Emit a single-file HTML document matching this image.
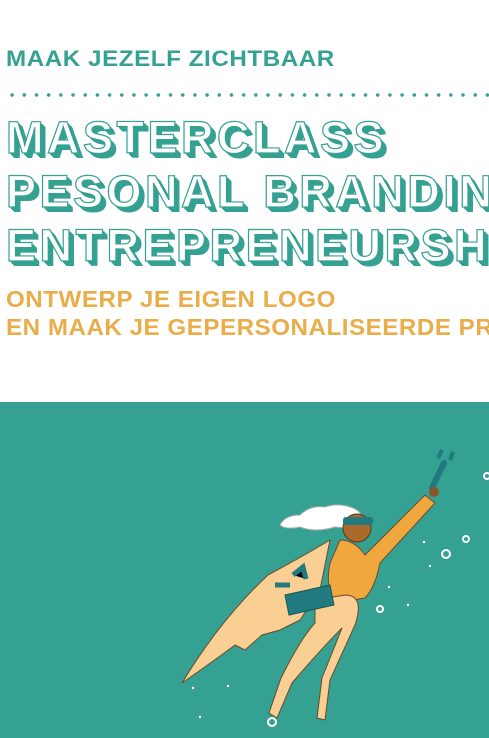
<!DOCTYPE html>
<html><head><meta charset="utf-8"><style>
html,body{margin:0;padding:0;width:489px;height:738px;overflow:hidden;background:#fff;font-family:"Liberation Sans",sans-serif}
#w{position:relative;width:489px;height:738px;overflow:hidden}
.t{position:absolute;left:6px;white-space:nowrap;font-weight:bold;text-transform:uppercase}
.sub{top:46px;font-size:22px;color:#35a193;letter-spacing:0.5px;transform:scaleX(1.1);transform-origin:left}
.dots{position:absolute;top:93px;left:6px;width:483px;height:4px;background:radial-gradient(circle,#35a193 1.6px,transparent 2px) 0 0/12.2px 4px repeat-x}
.big{font-size:45px;color:#fff;letter-spacing:3.5px;-webkit-text-stroke:1.2px #35a193;text-shadow:2px 2px 0 #35a193,3px 3px 0 #35a193,4px 4px 0 #35a193,5px 5px 0 #35a193}
.or{font-size:23px;color:#e9ad4a;letter-spacing:0.5px;transform:scaleX(1.05);transform-origin:left}
.teal{position:absolute;left:0;top:402px;width:489px;height:336px;background:#35a193}
</style></head><body><div id="w">
<div class="t sub">Maak jezelf zichtbaar</div>
<div class="dots"></div>
<div class="t big" style="top:112px">Masterclass</div>
<div class="t big" style="top:166px">Pesonal branding</div>
<div class="t big" style="top:220px">Entrepreneurship</div>
<div class="t or" style="top:286px">Ontwerp je eigen logo</div>
<div class="t or" style="top:314px">En maak je gepersonaliseerde producten</div>
<div class="teal">
<svg width="489" height="336" viewBox="0 402 489 336">
<path d="M330 540 Q300 558 268 575 Q220 620 182 683 Q215 660 235 645 L245 650 L262 635 L280 630 L300 620 L320 590 Z" fill="#f9cf94" stroke="#6b4a2b" stroke-width="1"/>
<path d="M280 525 q5-10 20-10 q10-10 25-8 q15-5 30 2 q10 5 5 15 q-10 5-25 3 q-20 6-35 0 q-15 3-20-2z" fill="#fff" stroke="#aaa" stroke-width="1"/>
<path d="M340 540 q15 0 25 15 l60-60 l10 8 l-55 60 q-5 25-15 35 l-30 5 q-10-15-5-40 z" fill="#f0a83e" stroke="#6b4a2b" stroke-width="1"/>
<circle cx="357" cy="528" r="14" fill="#a96a2c" stroke="#5a3a1a"/>
<rect x="343" y="517" width="30" height="8" rx="3" fill="#217a7f"/>
<path d="M315 600 l30 -5 q20 0 10 30 l-25 55 l-5 40 l-8 -2 l5-40 l20-50 q-20 20-50 55 l-15 35 l-8 -5 l12-35 q20-40 34-55z" fill="#f9cf94" stroke="#6b4a2b" stroke-width="1"/>
<path d="M285 595 l45-10 l4 20 l-45 10z" fill="#217a7f" stroke="#16575a"/>
<path d="M293 575 l10 -8 l3 12 M275 585 l15 0" stroke="#217a7f" stroke-width="5"/>
<path d="M432 488 l12 -25" stroke="#217a7f" stroke-width="6" stroke-linecap="round"/>
<path d="M438 458 l4 -8 M450 460 l3 -8" stroke="#217a7f" stroke-width="4"/>
<circle cx="434" cy="492" r="5" fill="#8a5526"/>
<g fill="none" stroke="#fff" stroke-width="2">
<circle cx="446" cy="554" r="4"/><circle cx="466" cy="539" r="3"/><circle cx="380" cy="609" r="3"/><circle cx="272" cy="722" r="4"/><circle cx="487" cy="476" r="3"/>
</g>
<g fill="#fff"><circle cx="424" cy="542" r="1.2"/><circle cx="408" cy="605" r="1.2"/><circle cx="389" cy="587" r="1.2"/><circle cx="430" cy="566" r="1.2"/><circle cx="228" cy="686" r="1.2"/><circle cx="193" cy="688" r="1.2"/><circle cx="200" cy="717" r="1.2"/></g>
</svg>
</div>
</div></body></html>
